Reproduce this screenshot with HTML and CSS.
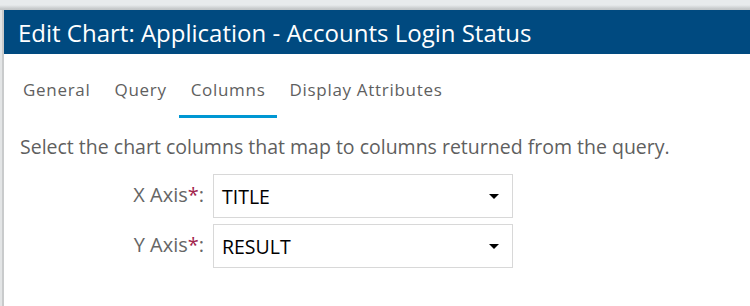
FILE: index.html
```html
<!DOCTYPE html>
<html lang="en">

<head>
  <meta charset="UTF-8">
  <title>Edit Chart</title>
  <link rel="stylesheet" href="styles.css">
</head>

<body>
  <div class="frame">
    <div class="dialog">
      <div class="dialog-header">
        <h1>Edit Chart: Application - Accounts Login Status</h1>
      </div>
      <ul class="tabs">
        <li class="tab">General</li>
        <li class="tab">Query</li>
        <li class="tab active">Columns</li>
        <li class="tab">Display Attributes</li>
      </ul>
      <div class="dialog-body">
        <p class="intro">Select the chart columns that map to columns returned from the query.</p>
        <div class="field">
          <label class="label">X Axis<span class="req">*</span>:</label>
          <div class="select">
            <span>TITLE</span>
            <span class="caret"></span>
          </div>
        </div>
        <div class="field">
          <label class="label">Y Axis<span class="req">*</span>:</label>
          <div class="select">
            <span>RESULT</span>
            <span class="caret"></span>
          </div>
        </div>
      </div>
    </div>
  </div>
</body>

</html>
```

FILE: styles.css
```css
* {
  margin: 0;
  padding: 0;
  box-sizing: border-box;
}

body {
  font-family: "Open Sans", sans-serif;
  background: #e8ebec;
  height: 306px;
  overflow: hidden;
}

.frame {
  padding-top: 10px;
  height: 100%;
  background: linear-gradient(#e8ebec 0, #e8ebec 5px, #c4c7c8 9px, #c4c7c8 10px);
}

.dialog {
  height: 100%;
  margin-left: 4px;
  background: #fff;
  box-shadow: -2px 0 0 #c9cbcc, -4px 0 0 #e3e5e6;
}

.dialog-header {
  background: #004a80;
  height: 44px;
  padding-left: 14px;
  display: flex;
  align-items: center;
}

.dialog-header h1 {
  color: #fff;
  font-weight: 400;
  font-size: 24px;
}

.tabs {
  list-style: none;
  display: flex;
  padding-left: 7px;
  margin-top: 12px;
}

.tab {
  padding: 12px 12px 14px;
  font-size: 17px;
  line-height: 23px;
  color: #5f5f5f;
  letter-spacing: 0.7px;
  border-bottom: 3px solid transparent;
}

.tab.active {
  border-bottom-color: #0097d3;
}

.dialog-body {
  padding: 15px 16px 0;
}

.intro {
  font-size: 19.5px;
  line-height: 27px;
  color: #5f5f5f;
}

.field {
  display: flex;
  align-items: center;
  margin-top: 6px;
}

.intro + .field {
  margin-top: 14px;
}

.label {
  width: 193px;
  text-align: right;
  padding-right: 9px;
  font-size: 20px;
  color: #666;
  margin-top: -4px;
}

.req {
  color: #a2234d;
}

.select {
  width: 300px;
  height: 44px;
  border: 1px solid #d8d8d8;
  display: flex;
  align-items: center;
  justify-content: space-between;
  padding: 0 13px 0 8px;
  font-size: 19.5px;
  color: #000;
}

.caret {
  width: 0;
  height: 0;
  border-left: 5px solid transparent;
  border-right: 5px solid transparent;
  border-top: 5px solid #000;
}
```
